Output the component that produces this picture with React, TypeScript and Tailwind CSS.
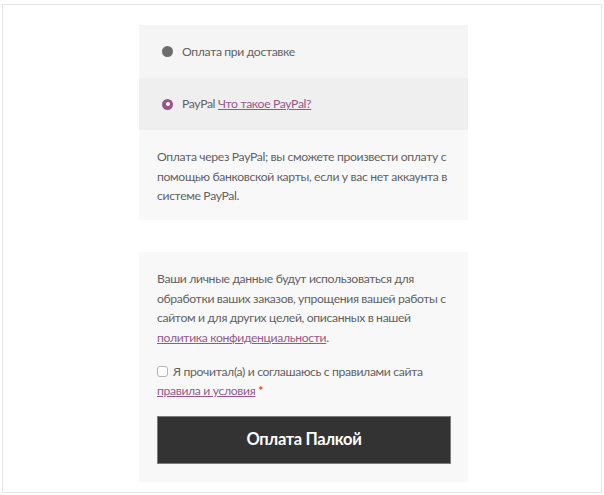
import React from "react";

const font = { fontFamily: 'Lato, "Open Sans", sans-serif' };

export default function App() {
  return (
    <div className="w-[604px] h-[495px] bg-white pt-[4px] px-[2px]" style={font}>
      <div className="h-[489px] w-[600px] border border-[#e6e6e6] pt-[20px] pl-[136px]">
        <div className="w-[329px] text-[12.2px] tracking-[-0.35px] leading-[19.5px] text-[#626262] whitespace-nowrap">
          <div className="h-[53px] bg-[#f5f5f5] flex items-center pl-[23px]">
            <span className="w-[11px] h-[11px] rounded-full bg-[#6d6d6d] shrink-0" />
            <span className="ml-[9px]">Оплата при доставке</span>
          </div>
          <div className="h-[52px] bg-[#efefef] flex items-center pl-[23px]">
            <span className="w-[11px] h-[11px] rounded-full bg-[#96588a] shrink-0 flex items-center justify-center">
              <span className="w-[4px] h-[4px] rounded-full bg-white" />
            </span>
            <span className="ml-[9px]">
              PayPal <a className="text-[#96588a] underline">Что такое PayPal?</a>
            </span>
          </div>
          <div className="h-[90px] bg-[#f8f8f8] px-[18px] pt-[17px]">
            Оплата через PayPal; вы сможете произвести оплату с<br />
            помощью банковской карты, если у вас нет аккаунта в<br />
            системе PayPal.
          </div>
          <div className="mt-[32px] bg-[#f8f8f8] px-[18px] pt-[17px] pb-[18px]">
            <p>
              Ваши личные данные будут использоваться для<br />
              обработки ваших заказов, упрощения вашей работы с<br />
              сайтом и для других целей, описанных в нашей<br />
              <a className="text-[#96588a] underline">политика конфиденциальности</a>.
            </p>
            <div className="mt-[14.5px]">
              <span className="inline-block align-middle w-[11px] h-[11px] rounded-[3px] border border-[#b5b5b5] bg-white mr-[5px] -mt-[2px]" />
              Я прочитал(а) и соглашаюсь с правилами сайта<br />
              <a className="text-[#96588a] underline">правила и условия</a>{" "}
              <span className="text-[#e2401c] font-bold">*</span>
            </div>
            <button className="mt-[15px] w-[294px] h-[48px] bg-[#333333] border border-[#7a7a7a] text-white text-[16.5px] font-bold flex items-center justify-center">
              Оплата Палкой
            </button>
          </div>
        </div>
      </div>
    </div>
  );
}
